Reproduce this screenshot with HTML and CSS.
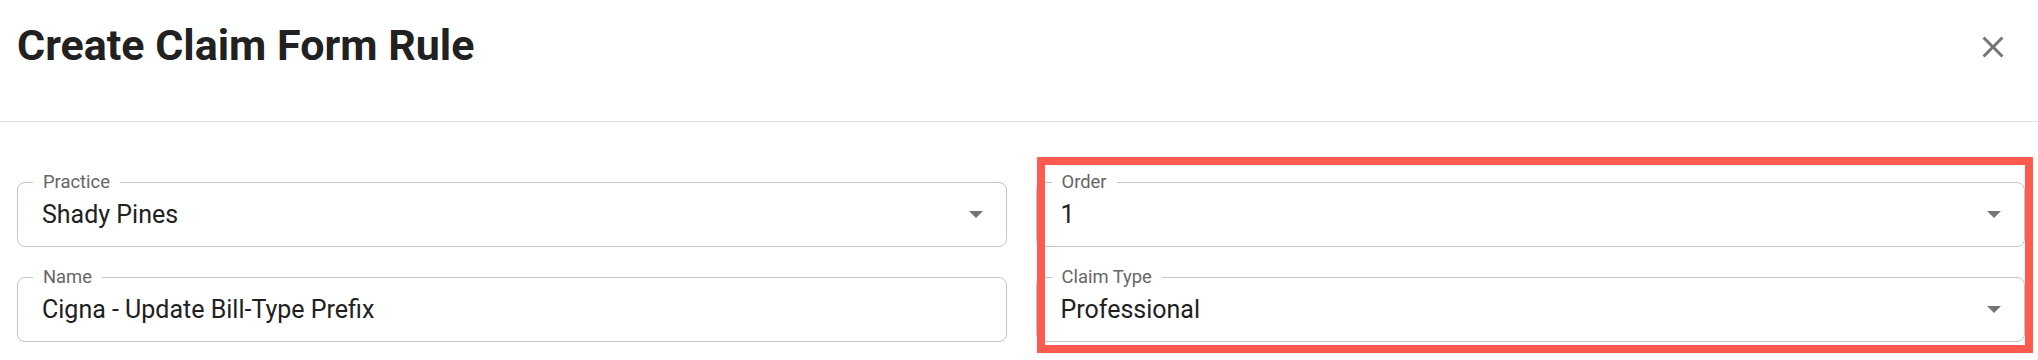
FILE: index.html
```html
<!DOCTYPE html>
<html lang="en">
<head>
<meta charset="utf-8">
<title>Create Claim Form Rule</title>
<link rel="stylesheet" href="styles.css">
</head>
<body>
<div class="dialog">
  <header class="dialog-header">
    <h2 class="dialog-title">Create Claim Form Rule</h2>
    <button class="close-btn" type="button" aria-label="Close">
      <svg viewBox="0 0 24 24" width="36" height="36" aria-hidden="true">
        <path fill="#757575" d="M19 6.41L17.59 5 12 10.59 6.41 5 5 6.41 10.59 12 5 17.59 6.41 19 12 13.41 17.59 19 19 17.59 13.41 12z"/>
      </svg>
    </button>
  </header>
  <div class="dialog-content">
    <div class="form-grid">
      <div class="field">
        <span class="field-label">Practice</span>
        <span class="field-value">Shady Pines</span>
        <span class="field-arrow"></span>
      </div>
      <div class="field">
        <span class="field-label">Order</span>
        <span class="field-value">1</span>
        <span class="field-arrow"></span>
      </div>
      <div class="field">
        <span class="field-label">Name</span>
        <span class="field-value">Cigna - Update Bill-Type Prefix</span>
      </div>
      <div class="field">
        <span class="field-label">Claim Type</span>
        <span class="field-value">Professional</span>
        <span class="field-arrow"></span>
      </div>
    </div>
  </div>
  <div class="highlight"></div>
</div>
</body>
</html>
```

FILE: styles.css
```css
* { box-sizing: border-box; }

html, body {
  margin: 0;
  padding: 0;
  background: #ffffff;
}

body {
  font-family: Roboto, "Noto Sans", "Liberation Sans", sans-serif;
  color: #212121;
}

.dialog {
  position: relative;
  width: 2038px;
  height: 360px;
  overflow: hidden;
}

.dialog-header {
  display: flex;
  align-items: flex-start;
  justify-content: space-between;
  height: 122px;
  padding: 23px 21px 0 17px;
  border-bottom: 1px solid #e0e0e0;
}

.dialog-title {
  margin: 0;
  font-size: 43px;
  line-height: 45px;
  font-weight: 700;
  color: #212121;
}

.close-btn {
  display: flex;
  align-items: center;
  justify-content: center;
  width: 48px;
  height: 48px;
  padding: 0;
  border: 0;
  background: transparent;
  cursor: pointer;
}

.dialog-content {
  padding: 60px 13px 0 17px;
}

.form-grid {
  display: grid;
  grid-template-columns: 1fr 1fr;
  column-gap: 29px;
  row-gap: 30px;
}

.field {
  position: relative;
  display: flex;
  align-items: center;
  height: 65px;
  border: 1px solid #c4c4c4;
  border-radius: 8px;
  padding-left: 24px;
}

.field-label {
  position: absolute;
  top: -10px;
  left: 15px;
  padding: 0 10px;
  background: #ffffff;
  font-size: 18.4px;
  line-height: 18px;
  color: #666666;
}

.field-value {
  flex: 1;
  font-size: 25px;
  color: #212121;
  white-space: nowrap;
}

.field-arrow {
  width: 0;
  height: 0;
  margin-right: 23px;
  border-left: 7px solid transparent;
  border-right: 7px solid transparent;
  border-top: 7px solid #757575;
}

.highlight {
  position: absolute;
  left: 1037px;
  top: 157px;
  width: 996px;
  height: 196px;
  border: 8px solid #ff5a4f;
  pointer-events: none;
}
```
